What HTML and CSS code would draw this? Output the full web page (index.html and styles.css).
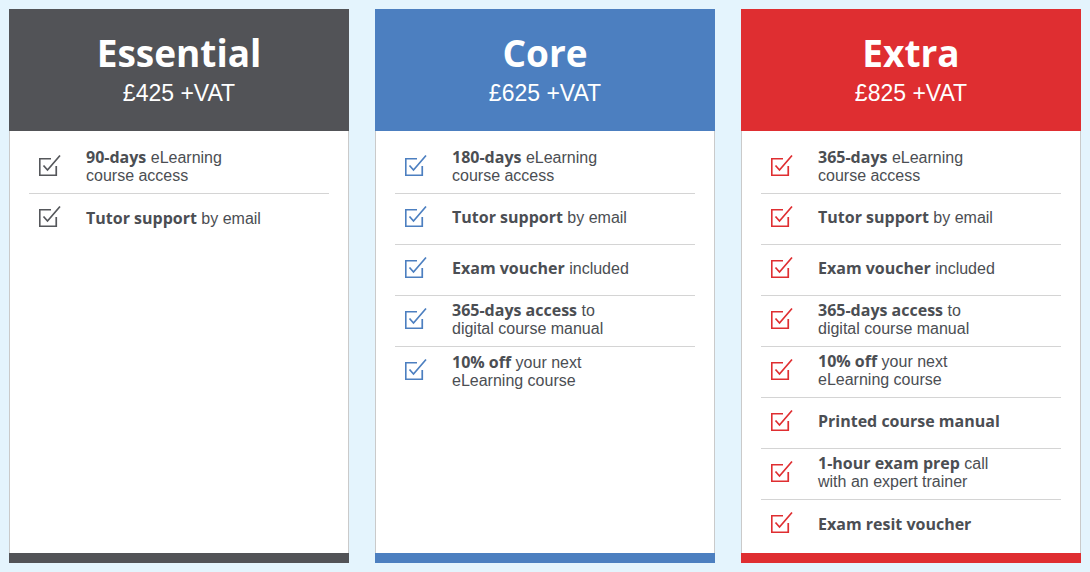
FILE: index.html
```html
<!DOCTYPE html>
<html>
<head>
<meta charset="utf-8">
<link rel="stylesheet" href="styles.css">
</head>
<body>
<div class="plans">
  <div class="card essential">
    <div class="head">
      <div class="title">Essential</div>
      <div class="price">£425 +VAT</div>
    </div>
    <ul class="features">
      <li><svg class="ico" viewBox="0 0 22 22"><path d="M12 4.75H0.75V21.25H17.25V12"/><path d="M4.5 11.5L8.5 16L21 1.5"/></svg><span><b>90-days</b> eLearning<br>course access</span></li>
      <li><svg class="ico" viewBox="0 0 22 22"><path d="M12 4.75H0.75V21.25H17.25V12"/><path d="M4.5 11.5L8.5 16L21 1.5"/></svg><span><b>Tutor support</b> by email</span></li>
    </ul>
  </div>
  <div class="card core">
    <div class="head">
      <div class="title">Core</div>
      <div class="price">£625 +VAT</div>
    </div>
    <ul class="features">
      <li><svg class="ico" viewBox="0 0 22 22"><path d="M12 4.75H0.75V21.25H17.25V12"/><path d="M4.5 11.5L8.5 16L21 1.5"/></svg><span><b>180-days</b> eLearning<br>course access</span></li>
      <li><svg class="ico" viewBox="0 0 22 22"><path d="M12 4.75H0.75V21.25H17.25V12"/><path d="M4.5 11.5L8.5 16L21 1.5"/></svg><span><b>Tutor support</b> by email</span></li>
      <li><svg class="ico" viewBox="0 0 22 22"><path d="M12 4.75H0.75V21.25H17.25V12"/><path d="M4.5 11.5L8.5 16L21 1.5"/></svg><span><b>Exam voucher</b> included</span></li>
      <li><svg class="ico" viewBox="0 0 22 22"><path d="M12 4.75H0.75V21.25H17.25V12"/><path d="M4.5 11.5L8.5 16L21 1.5"/></svg><span><b>365-days access</b> to<br>digital course manual</span></li>
      <li><svg class="ico" viewBox="0 0 22 22"><path d="M12 4.75H0.75V21.25H17.25V12"/><path d="M4.5 11.5L8.5 16L21 1.5"/></svg><span><b>10% off</b> your next<br>eLearning course</span></li>
    </ul>
  </div>
  <div class="card extra">
    <div class="head">
      <div class="title">Extra</div>
      <div class="price">£825 +VAT</div>
    </div>
    <ul class="features">
      <li><svg class="ico" viewBox="0 0 22 22"><path d="M12 4.75H0.75V21.25H17.25V12"/><path d="M4.5 11.5L8.5 16L21 1.5"/></svg><span><b>365-days</b> eLearning<br>course access</span></li>
      <li><svg class="ico" viewBox="0 0 22 22"><path d="M12 4.75H0.75V21.25H17.25V12"/><path d="M4.5 11.5L8.5 16L21 1.5"/></svg><span><b>Tutor support</b> by email</span></li>
      <li><svg class="ico" viewBox="0 0 22 22"><path d="M12 4.75H0.75V21.25H17.25V12"/><path d="M4.5 11.5L8.5 16L21 1.5"/></svg><span><b>Exam voucher</b> included</span></li>
      <li><svg class="ico" viewBox="0 0 22 22"><path d="M12 4.75H0.75V21.25H17.25V12"/><path d="M4.5 11.5L8.5 16L21 1.5"/></svg><span><b>365-days access</b> to<br>digital course manual</span></li>
      <li><svg class="ico" viewBox="0 0 22 22"><path d="M12 4.75H0.75V21.25H17.25V12"/><path d="M4.5 11.5L8.5 16L21 1.5"/></svg><span><b>10% off</b> your next<br>eLearning course</span></li>
      <li><svg class="ico" viewBox="0 0 22 22"><path d="M12 4.75H0.75V21.25H17.25V12"/><path d="M4.5 11.5L8.5 16L21 1.5"/></svg><span><b>Printed course manual</b></span></li>
      <li><svg class="ico" viewBox="0 0 22 22"><path d="M12 4.75H0.75V21.25H17.25V12"/><path d="M4.5 11.5L8.5 16L21 1.5"/></svg><span><b>1-hour exam prep</b> call<br>with an expert trainer</span></li>
      <li><svg class="ico" viewBox="0 0 22 22"><path d="M12 4.75H0.75V21.25H17.25V12"/><path d="M4.5 11.5L8.5 16L21 1.5"/></svg><span><b>Exam resit voucher</b></span></li>
    </ul>
  </div>
</div>
</body>
</html>
```
FILE: styles.css
```css
html, body {
  margin: 0;
  padding: 0;
  background: #e4f4fd;
}
.plans {
  display: flex;
  gap: 26px;
  padding: 9px;
  height: 554px;
}
.card {
  width: 340px;
  display: flex;
  flex-direction: column;
  background: #fff;
  border-bottom: 10px solid var(--c);
  box-shadow: inset 1px 0 0 #cacaca, inset -1px 0 0 #cacaca;
}
.essential { --c: #525357; }
.core { --c: #4c7fc0; }
.extra { --c: #df2e31; }
.head {
  background: var(--c);
  height: 122px;
  color: #fff;
  text-align: center;
  box-sizing: border-box;
  padding-top: 21px;
}
.title {
  font-family: "Open Sans", sans-serif;
  font-weight: 700;
  font-size: 37px;
  line-height: 46px;
}
.price {
  font-family: "Liberation Sans", Arial, sans-serif;
  font-size: 23px;
  line-height: 30px;
  margin-top: 2px;
}
.features {
  list-style: none;
  margin: 0;
  padding: 12px 20px 0;
}
.features li {
  display: flex;
  align-items: center;
  box-sizing: border-box;
  min-height: 51px;
  padding: 0 0 3px 10px;
  border-bottom: 1px solid #d4d4d4;
  font-family: "Liberation Sans", Arial, sans-serif;
  font-size: 16px;
  line-height: 18px;
  color: #4b4e53;
}
.features li:last-child {
  border-bottom: none;
}
.features b {
  font-family: "Open Sans", sans-serif;
  font-weight: 700;
}
.ico {
  width: 22px;
  height: 22px;
  flex: none;
  margin-right: 25px;
  margin-top: -4px;
  fill: none;
  stroke: var(--c);
  stroke-width: 1.7;
}
.essential .ico { stroke: #55575b; }
```
